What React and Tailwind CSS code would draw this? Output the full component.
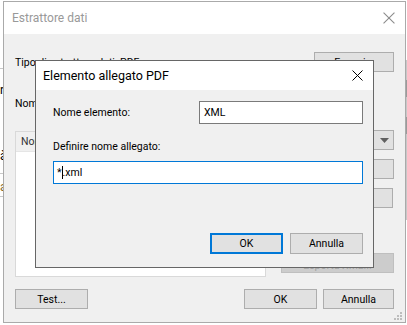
import React from 'react';

const font = { fontFamily: '"Segoe UI", Roboto, "Liberation Sans", sans-serif' };

const Btn = ({ children, className = '' }) => (
  <div className={`h-[20px] flex items-center justify-center bg-[#e1e1e1] border border-[#adadad] text-black ${className}`}>
    {children}
  </div>
);

const CloseX = ({ color = '#000', size = 11 }) => (
  <svg width={size} height={size} viewBox="0 0 11 11">
    <path d="M0.5 0.5 L10.5 10.5 M10.5 0.5 L0.5 10.5" stroke={color} strokeWidth="1" />
  </svg>
);

const Grip = () => (
  <svg width="8" height="8" viewBox="0 0 8 8" fill="#bdbdbd">
    <rect x="6" y="0" width="2" height="2" />
    <rect x="3" y="3" width="2" height="2" />
    <rect x="6" y="3" width="2" height="2" />
    <rect x="0" y="6" width="2" height="2" />
    <rect x="3" y="6" width="2" height="2" />
    <rect x="6" y="6" width="2" height="2" />
  </svg>
);

export default function App() {
  return (
    <div className="relative w-[407px] h-[325px] bg-white overflow-hidden text-[10.5px] leading-[15px]" style={font}>
      {/* bits of the app behind */}
      <div className="absolute left-0 top-[68px] w-[3px] h-px bg-[#c8c8c8]" />
      <div className="absolute left-0 top-[84px] text-[12px] leading-none">r</div>
      <div className="absolute left-0 top-[150px] text-[12px] leading-none">à</div>
      <div className="absolute left-0 top-[173px] w-[3px] h-px bg-[#c8c8c8]" />
      <div className="absolute left-0 top-[181px] text-[12px] leading-none text-[#8a6a2a]">a</div>
      <div className="absolute left-0 top-[196px] w-[3px] h-px bg-[#c8c8c8]" />
      <div className="absolute right-0 top-[60px] w-px h-[160px] bg-[#c8c8c8]" />
      <div className="absolute right-0 top-[80px] w-px h-[17px] bg-[#9a9a9a]" />
      <div className="absolute right-0 top-[117px] w-px h-[17px] bg-[#9a9a9a]" />

      {/* outer window */}
      <div className="absolute left-[3px] top-[1px] w-[403px] h-[322px] border border-[#aaaaaa] bg-[#f0f0f0] flex flex-col">
        <div className="h-[32px] bg-white flex items-center justify-between pl-[8px] pr-[10px] shrink-0">
          <span className="text-[#999999] text-[12px]">Estrattore dati</span>
          <CloseX color="#8c8c8c" size={12} />
        </div>

        <div className="flex-1 flex flex-col pl-[11px] pr-[11px] relative">
          <div className="flex items-center justify-between mt-[18px]">
            <span>Tipo di estrattore dati: PDF</span>
            <Btn className="w-[80px]">Esegui...</Btn>
          </div>
          <div className="mt-[21px] h-[20px] flex items-center">
            <span>Nome:</span>
          </div>

          <div className="flex mt-[17px] gap-[15px]">
            <div className="w-[251px] h-[146px] mt-px bg-white border border-[#d9d9d9] flex flex-col">
              <div className="h-[20px] bg-[#f0f0f0] border-b border-[#e5e5e5] flex items-center pl-[5px] text-[#333]">
                Nome
              </div>
            </div>
            <div className="flex-1 flex flex-col">
              <div className="h-[20px] bg-[#e1e1e1] border border-[#adadad] flex items-center justify-end pr-[4px]">
                <svg width="9" height="5" viewBox="0 0 9 5"><path d="M0 0 H9 L4.5 5 Z" fill="#606060" /></svg>
              </div>
              <Btn className="mt-[9px]">Modifica...</Btn>
              <Btn className="mt-[9px] mr-px">Elimina</Btn>
              <div className="mt-[45px] h-[20px] bg-[#cccccc] border border-[#bfbfbf] flex items-center justify-center text-[#a3a3a3] pt-[5px]">
                Esporta XML...
              </div>
            </div>
          </div>

          <div className="flex mt-[12px] items-center">
            <Btn className="w-[73px]">Test...</Btn>
            <div className="flex-1" />
            <Btn className="w-[73px]">OK</Btn>
            <Btn className="w-[71px] ml-[6px]">Annulla</Btn>
          </div>

          <div className="absolute right-[3px] bottom-[2px]">
            <Grip />
          </div>
        </div>
      </div>

      {/* modal dialog */}
      <div className="absolute left-[35px] top-[60px] w-[339px] h-[208px] border border-[#666666] bg-[#f0f0f0] flex flex-col">
        <div className="h-[29px] bg-white flex items-center justify-between pl-[7px] pr-[10px] shrink-0">
          <span className="text-[12.5px] text-black">Elemento allegato PDF</span>
          <CloseX />
        </div>
        <div className="flex-1 flex flex-col pl-[17px] pr-[10px]">
          <div className="flex items-center justify-between mt-[11px]">
            <span>Nome elemento:</span>
            <div className="w-[164px] h-[23px] bg-white border border-[#7a7a7a] flex items-center pl-[4px]">XML</div>
          </div>
          <div className="mt-[15px] h-[15px]">Definire nome allegato:</div>
          <div className="mt-[7px] h-[23px] bg-white border border-[#0078d7] flex items-center pl-[3px]">
            <span>*</span>
            <span className="w-px h-[13px] bg-black" />
            <span>.xml</span>
          </div>
          <div className="flex justify-end gap-[7px] mt-[49px]">
            <div className="w-[73px] h-[21px] bg-[#e1e1e1] border-2 border-[#0078d7] flex items-center justify-center">OK</div>
            <Btn className="w-[73px] h-[21px]">Annulla</Btn>
          </div>
        </div>
      </div>
    </div>
  );
}
